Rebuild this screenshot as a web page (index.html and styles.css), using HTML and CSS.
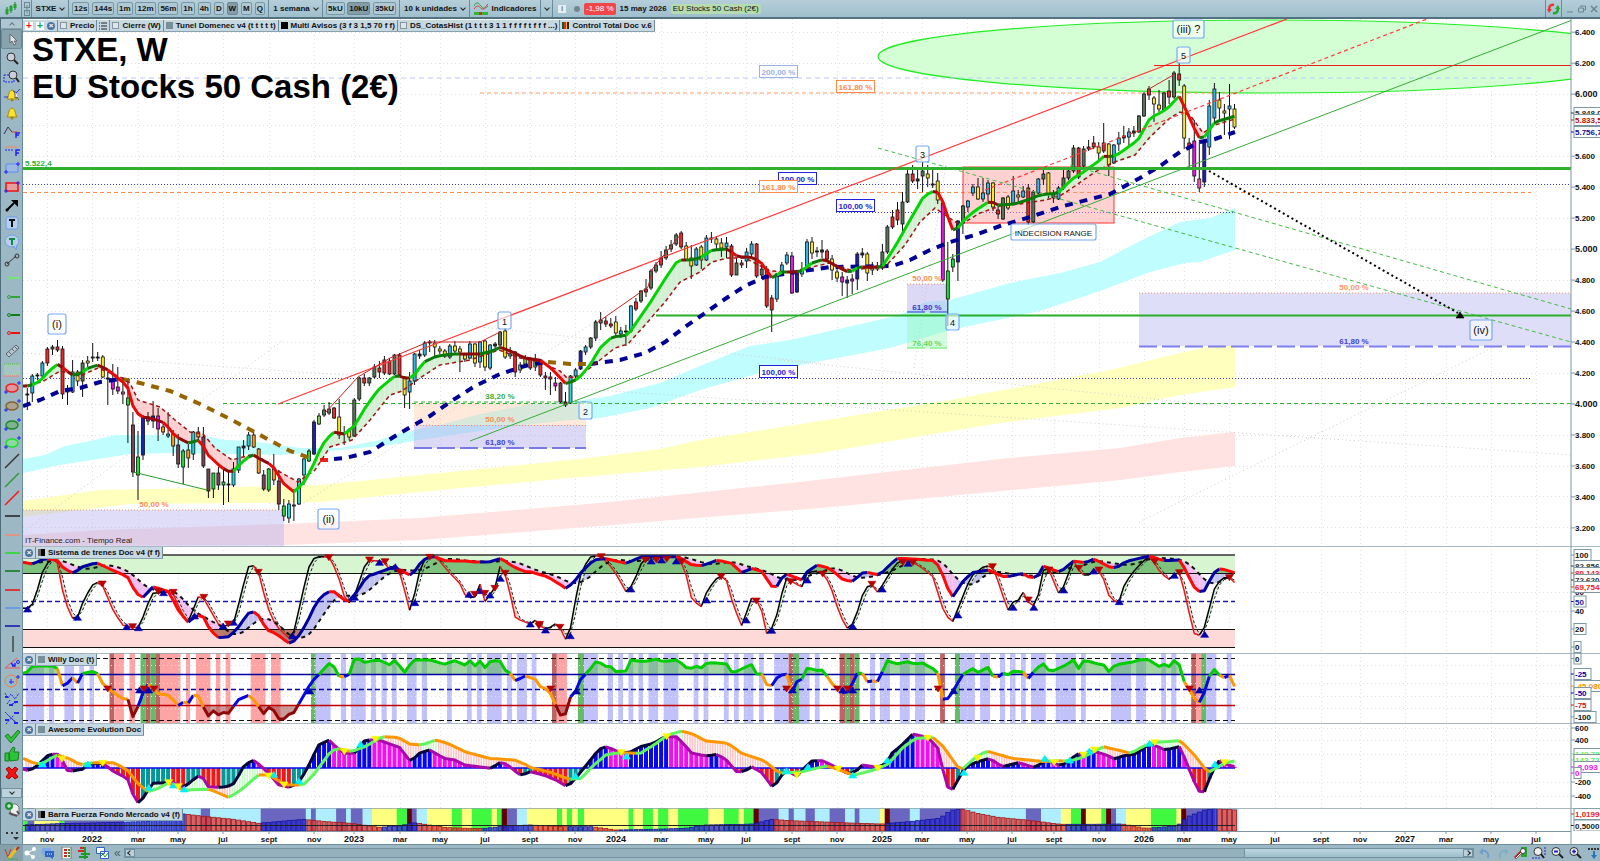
FILE: index.html
```html
<!DOCTYPE html>
<html lang="es">
<head>
    <meta charset="UTF-8">
    <meta name="viewport" content="width=device-width, initial-scale=1.0">
    <title>STXE - EU Stocks 50 Cash (2€)</title>
    <link rel="stylesheet" href="styles.css">
</head>
<body>
    <header class="toolbar">
        <div class="cell logo">
            <svg width="12" height="14" viewBox="0 0 12 14"><path d="M2 5v8M6 3v8M10 0v8" stroke="#1b7d22" stroke-width="1"/><path d="M2 7v5M6 4v5M10 2v4" stroke="#25a32c" stroke-width="3"/></svg>
        </div>
        <div class="cell link">
            <svg width="6" height="14" viewBox="0 0 6 14" fill="none" stroke="#6f8793"><rect x=".5" y=".5" width="5" height="5"/><rect x=".5" y="8.500" width="5" height="5"/><path d="M3 3v8"/></svg>
        </div>
        <div class="cell symbol"><button class="drop">STXE <i class="chev"></i></button></div>
        <div class="cell frames">
            <button>12s</button><button>144s</button><button>1m</button><button>12m</button><button>56m</button><button>1h</button><button>4h</button><button>D</button><button class="on">W</button><button>M</button><button>Q</button>
        </div>
        <div class="cell period"><button class="drop">1 semana <i class="chev"></i></button></div>
        <div class="cell frames units"><button>5kU</button><button class="on">10kU</button><button>35kU</button></div>
        <div class="cell count"><button class="drop">10 k unidades <i class="chev"></i></button></div>
        <div class="cell indic">
            <button class="drop"><svg width="14" height="13" viewBox="0 0 14 13" fill="none"><path d="M0 4C3-2 5 2 7 4s3 4 7 0" stroke="#2c9a35"/><path d="M0 7c4-6 6-1 8 0s4-3 6-5" stroke="#d33"/><path d="M0 10h14v3H0z" fill="#2db836"/><path d="M5 10h3v3H5z" fill="#e22"/></svg>Indicadores</button>
        </div>
        <div class="cell more"><button class="drop" aria-label="Más indicadores"><i class="chev"></i></button></div>
        <div class="info">
            <span class="i">i</span><span class="dot"></span>
            <span class="change">-1,98 %</span>
            <b>15 may 2026</b>
            <span class="name">EU Stocks 50 Cash (2€)</span>
        </div>
        <div class="window">
            <button class="sync" aria-label="Sincronizar"><svg width="13" height="12" viewBox="0 0 13 12" fill="none" stroke-width="2.500"><path d="M7 2C3 1 2 4 2 7" stroke="#e8382e"/><path d="M0 6h5L2 10z" fill="#e8382e"/><path d="M6 10c4 1 5-2 5-5" stroke="#22a82c"/><path d="M8 6h5l-2-4z" fill="#22a82c"/></svg></button>
            <button aria-label="Minimizar"><svg width="8" height="8" viewBox="0 0 8 8"><path d="M1 7h6" stroke="#6d8591"/></svg></button>
            <button aria-label="Restaurar"><svg width="8" height="8" viewBox="0 0 8 8" fill="none" stroke="#6d8591"><path d="M2.500 2V1h5v4h-2"/><path d="M.5 3h5v4h-5z"/></svg></button>
            <button aria-label="Cerrar"><svg width="8" height="8" viewBox="0 0 8 8"><path d="M1 1l6 6M7 1L1 7" stroke="#6d8591" stroke-width="1.500"/></svg></button>
        </div>
    </header>

    <div class="work">
        <nav class="tools" aria-label="Herramientas de dibujo">
            <button class="fold" aria-label="Subir"><i class="chev up"></i></button>
            <div class="list" id="tools"></div>
            <button class="fold low" aria-label="Bajar"><i class="chev"></i></button>
            <button class="extra" aria-label="Plantillas"><svg width="18" height="18" viewBox="0 0 18 18"><path d="M6 3h7l3 3v8H8z" fill="#eee" stroke="#777"/><circle cx="6" cy="5" r="4" fill="#1d9433"/><path d="M4 5h4M6 3v4" stroke="#fff"/><path d="M6 12l8 3M14 10l2 3" stroke="#555" stroke-width="2"/></svg></button>
            <button class="extra" aria-label="Más"><svg width="18" height="18" viewBox="0 0 18 18"><path d="M3 8h2v2H3zM8 8h2v2H8zM13 8h2v2h-2zM10 13h6l-3 3z" fill="#333"/></svg></button>
        </nav>

        <main class="charts">
            <section class="panel">
                <svg id="price" viewBox="23 19 1577 527" preserveAspectRatio="none" role="img" aria-label="Precio"></svg>
                <div class="legend">
                    <span class="key acts"><i class="sq red">+</i><i class="sq green">+</i><i class="x">×</i></span>
                    <span class="key"><i class="box"></i>Precio</span>
                    <span class="key"><svg width="8" height="8" viewBox="0 0 8 8"><path d="M0 1h1M2 1h6M0 4h1M2 4h6M0 7h1M2 7h6" stroke="#222"/></svg></span>
                    <span class="key"><i class="box"></i>Cierre (W)</span>
                    <span class="key"><i class="box fill"></i>Tunel Domenec v4 (t t t t t)</span>
                    <span class="key"><i class="box black"></i>Multi Avisos (3 f 3 1,5 70 f f)</span>
                    <span class="key"><i class="box"></i>DS_CotasHist (1 t t t 3 1 1 f f f f t f f f ...)</span>
                    <span class="key"><i class="bars"></i>Control Total Doc v.6</span>
                </div>
                <h1>STXE, W<br>EU Stocks 50 Cash (2€)</h1>
            </section>
            <section class="panel">
                <svg id="trains" viewBox="23 546 1577 107" preserveAspectRatio="none" role="img" aria-label="Sistema de trenes"></svg>
                <div class="legend"><span class="key acts"><i class="x">×</i></span><span class="key"><i class="box half"></i>Sistema de trenes Doc v4 (f f)</span></div>
            </section>
            <section class="panel">
                <svg id="willy" viewBox="23 653 1577 70" preserveAspectRatio="none" role="img" aria-label="Willy Doc"></svg>
                <div class="legend"><span class="key acts"><i class="x">×</i></span><span class="key"><i class="box fill"></i>Willy Doc (t)</span></div>
            </section>
            <section class="panel">
                <svg id="awesome" viewBox="23 723 1577 85" preserveAspectRatio="none" role="img" aria-label="Awesome Evolution"></svg>
                <div class="legend"><span class="key acts"><i class="x">×</i></span><span class="key"><i class="box fill"></i>Awesome Evolution Doc</span></div>
            </section>
            <section class="panel">
                <svg id="force" viewBox="23 808 1577 23" preserveAspectRatio="none" role="img" aria-label="Barra Fuerza"></svg>
                <div class="legend"><span class="key acts"><i class="x">×</i></span><span class="key"><i class="box half"></i>Barra Fuerza Fondo Mercado v4 (f)</span></div>
            </section>
            <section class="panel">
                <svg id="months" viewBox="23 831 1577 13" preserveAspectRatio="none" role="img" aria-label="Fechas"></svg>
            </section>
        </main>
    </div>

    <footer class="bottom">
        <button class="pencil" aria-label="Dibujar"><svg width="16" height="14" viewBox="0 0 16 14" fill="none"><path d="M1 3l3 8 3-8" stroke="#c33"/><path d="M5 12l8-10" stroke="#e8c21a" stroke-width="3"/><path d="M4 13h10" stroke="#4a4"/><path d="M12 4l3-3" stroke="#a33" stroke-width="2"/></svg></button>
        <div class="left">
            <button aria-label="Compartir"><svg width="13" height="12" viewBox="0 0 13 12"><path d="M11 2L3 6l7 4" stroke="#fff" fill="none"/><circle cx="3" cy="6" r="2.500" fill="#fff"/><circle cx="10" cy="2" r="2" fill="#fff"/><circle cx="9" cy="10" r="2" fill="#fff"/></svg></button>
            <button aria-label="Mensajes"><svg width="13" height="12" viewBox="0 0 13 12"><path d="M0 1h9v6H4l-3 2V7H0z" fill="#7da9e8"/><path d="M3 4h9v6h-1v2L8 10H3z" fill="#2f63c4"/><path d="M5 7h1M7 7h1M9 7h1" stroke="#fff"/></svg></button>
            <button aria-label="Informe"><svg width="13" height="12" viewBox="0 0 13 12"><path d="M2 0h9v12H2z" fill="#f4f4f4" stroke="#777"/><path d="M4 3h3M4 6h3M4 9h3" stroke="#c22" stroke-width="2"/><path d="M8 3h2M8 6h2M8 9h2" stroke="#292" stroke-width="2"/></svg></button>
            <button aria-label="Libro"><svg width="13" height="12" viewBox="0 0 13 12"><path d="M2 1h6M0 4h6" stroke="#d22" stroke-width="2"/><path d="M3 7h9M1 10h9" stroke="#1e9a2b" stroke-width="2"/><path d="M7 0v12" stroke="#1e9a2b" stroke-width="2"/></svg></button>
            <button aria-label="Ventanas"><svg width="13" height="12" viewBox="0 0 13 12" fill="#fff" stroke="#2f63c4"><path d="M.5 .5h8v6h-8zM4.500 4.500h8v7h-8z"/><path d="M5 9l2-2 2 3 3-4" fill="none" stroke="#292"/></svg></button>
            <span class="laquo">«</span>
        </div>
        <div class="scroll">
            <button aria-label="Atrás"><i class="chev back"></i></button>
            <span class="track"></span><span class="thumb"></span>
            <button aria-label="Adelante"><i class="chev next"></i></button>
        </div>
        <div class="right">
            <button aria-label="Deshacer"><svg width="14" height="12" viewBox="0 0 14 12" fill="none"><path d="M3 4c5-1 8 1 7 7" stroke="#6f9fc8" stroke-width="2"/><path d="M1 5l4-4v7z" fill="#6f9fc8"/></svg></button>
            <button aria-label="Rehacer"><svg width="14" height="12" viewBox="0 0 14 12" fill="none"><path d="M11 4c-5-1-8 1-7 7" stroke="#7db0c4" stroke-width="2"/><path d="M13 5L9 1v7z" fill="#7db0c4"/></svg></button>
            <button aria-label="Ajustes"><svg width="14" height="12" viewBox="0 0 14 12"><path d="M7 0h6v10H7z" fill="#28a832"/><path d="M1 11l7-7" stroke="#b22" stroke-width="3"/><path d="M2 11l6-6" stroke="#fff"/><circle cx="9" cy="4" r="2.500" fill="#fff" stroke="#444"/></svg></button>
            <button aria-label="Zoom ajustado"><svg width="14" height="12" viewBox="0 0 14 12"><circle cx="6" cy="4.500" r="4" fill="#eee" stroke="#333"/><path d="M9 7l3 4" stroke="#222" stroke-width="2"/><path d="M13 0v8M0 11h8" stroke="#22c" stroke-dasharray="2 1"/></svg></button>
            <button aria-label="Alejar"><svg width="14" height="12" viewBox="0 0 14 12"><circle cx="6" cy="4.500" r="4" fill="#eee" stroke="#333"/><path d="M9 7l4 4" stroke="#222" stroke-width="2"/><path d="M4 4.500h4" stroke="#22c" stroke-width="2"/></svg></button>
            <button aria-label="Acercar"><svg width="14" height="12" viewBox="0 0 14 12"><circle cx="6" cy="4.500" r="4" fill="#eee" stroke="#333"/><path d="M9 7l4 4" stroke="#222" stroke-width="2"/><path d="M4 4.500h4M6 2.500v4" stroke="#22c" stroke-width="1.500"/></svg></button>
            <button aria-label="Último dato"><svg width="14" height="12" viewBox="0 0 14 12"><path d="M2 2h12" stroke="#333" stroke-width="2" stroke-dasharray="2 1"/><path d="M8 4v7" stroke="#27b" stroke-width="2"/><path d="M5 8h6l-3 4z" fill="#27b"/></svg></button>
        </div>
    </footer>
    <script src="chart.js"></script>
</body>
</html>
```
FILE: styles.css
```css
* {
    box-sizing: border-box;
}
body {
    margin: 0;
    height: 100vh;
    display: flex;
    flex-direction: column;
    overflow: hidden;
    background: #fff;
    font-family: "Liberation Sans", Arial, sans-serif;
    font-size: 8px;
    color: #111;
}
button {
    font: inherit;
    color: inherit;
    margin: 0;
    padding: 0;
    border: 0;
    background: none;
    display: flex;
    align-items: center;
    justify-content: center;
    cursor: pointer;
}
svg {
    display: block;
    flex: none;
}
/* top bar */
.toolbar {
    display: flex;
    height: 19px;
    flex: none;
    background: linear-gradient(#b5ced9, #9fbfcd);
    border-bottom: 2px solid #527282;
    font-weight: bold;
}
.cell {
    display: flex;
    align-items: center;
    border-right: 1px solid #6c8b9a;
}
.logo {
    width: 22px;
    justify-content: center;
}
.link {
    width: 10px;
    justify-content: center;
}
.drop {
    gap: 4px;
    height: 100%;
}
.symbol {
    width: 37px;
    justify-content: center;
}
.chev {
    width: 4px;
    height: 4px;
    margin-bottom: 2px;
    border: solid #222;
    border-width: 0 1px 1px 0;
    transform: rotate(45deg);
}
.chev.up {
    margin: 2px 0 0;
    border-color: #617a86;
    transform: rotate(225deg);
}
.chev.back {
    margin: 0;
    transform: rotate(135deg);
}
.chev.next {
    margin: 0;
    transform: rotate(-45deg);
}
.frames {
    width: 200px;
    padding: 0 3px;
    justify-content: space-between;
}
.frames button {
    height: 13px;
    padding: 0 1px;
    border: 1px solid #7897a5;
    border-radius: 2px;
    background: #afc9d4;
}
.frames .on {
    background: #849ca7;
    border-color: #6d8794;
}
.period {
    width: 54px;
    justify-content: center;
}
.units {
    width: 77px;
}
.count {
    width: 70px;
    justify-content: center;
}
.indic {
    width: 71px;
    justify-content: center;
}
.more {
    width: 12px;
    justify-content: center;
}
.info {
    display: flex;
    align-items: center;
    gap: 4px;
    margin-left: 5px;
    flex: 1;
}
.info b,
.info span {
    white-space: nowrap;
}
.i {
    width: 8px;
    line-height: 8px;
    text-align: center;
    color: #6d7f88;
    background: #e6eef2;
}
.dot {
    width: 6px;
    height: 6px;
    margin-left: 4px;
    border-radius: 50%;
    background: #74868f;
}
.change {
    padding: 0 2px;
    line-height: 12px;
    border-radius: 2px;
    background: #f0484a;
    color: #fff;
    font-weight: normal;
}
.name {
    padding: 0 2px;
    line-height: 10px;
    border-radius: 2px;
    background: #b5dcae;
    font-weight: normal;
}
.window {
    display: flex;
    align-items: center;
    gap: 4px;
    padding-right: 2px;
}
.sync {
    width: 17px;
    height: 100%;
    border: solid #6c8b9a;
    border-width: 0 1px;
}
/* working area */
.work {
    display: flex;
    flex: 1;
    min-height: 0;
}
.tools {
    display: flex;
    flex-direction: column;
    flex: none;
    width: 23px;
    background: #9cb8c4;
    border-left: 1px solid #4f6e7d;
    border-right: 1px solid #6c8b9a;
}
.fold {
    height: 10px;
    flex: none;
    background: #adc6d1;
    border-bottom: 1px solid #84a0ad;
}
.fold.low {
    border: 1px solid #7592a0;
    background: #bcd2dc;
}
.list {
    display: flex;
    flex-direction: column;
    flex: 1;
    min-height: 0;
    margin-bottom: 6px;
}
.list button {
    flex: 1;
    min-height: 0;
}
.list .on {
    border: 1px solid #6d8996;
    border-radius: 2px;
    background: #88a2ae;
}
.extra {
    height: 23px;
    flex: none;
}
.charts {
    flex: 1;
    min-width: 0;
    display: grid;
    grid-template-rows: 527fr 107fr 70fr 85fr 23fr 13fr;
}
.panel {
    position: relative;
    min-height: 0;
}
.panel > svg {
    width: 100%;
    height: 100%;
    overflow: hidden;
}
.panel text {
    font-size: 8px;
    font-weight: bold;
}
.panel .big {
    font-size: 9px;
}
.panel .plain {
    font-weight: normal;
}
.panel .wave {
    font-size: 11px;
    font-weight: normal;
}
.panel .digit {
    font-size: 9px;
    font-weight: normal;
}
h1 {
    position: absolute;
    left: 9px;
    top: 12px;
    margin: 0;
    font-size: 33px;
    line-height: 37px;
    color: #000;
}
.legend {
    position: absolute;
    left: 0;
    top: 1px;
    display: flex;
    height: 12px;
    font-weight: bold;
    background: #c6d8e1;
    border-bottom: 1px solid #8aa2ae;
}
.key {
    display: flex;
    align-items: center;
    gap: 3px;
    padding: 0 2px;
    white-space: nowrap;
    border-right: 1px solid #708c9a;
}
.key i {
    font-style: normal;
}
.sq {
    width: 8px;
    line-height: 8px;
    background: #fff;
    text-align: center;
    font-size: 10px;
}
.sq.red {
    color: #e21f1f;
}
.sq.green {
    color: #1ca42a;
}
.x {
    width: 8px;
    line-height: 8px;
    border-radius: 50%;
    background: #4a73a0;
    color: #fff;
    text-align: center;
}
.box {
    width: 7px;
    height: 7px;
    border: 1px solid #87969e;
    background: #dbe6eb;
}
.box.fill {
    background: #78909a;
    border-color: #78909a;
}
.box.black {
    background: #000;
    border-color: #000;
}
.box.half {
    border: 0;
    background: linear-gradient(90deg, #666 3px, #000 3px);
}
.bars {
    width: 7px;
    height: 7px;
    background: linear-gradient(90deg, #063 2px, #e22 2px, #e22 4px, #fb0 4px, #fb0 5px, #222 5px);
}
/* bottom bar */
.bottom {
    display: flex;
    align-items: center;
    flex: none;
    height: 17px;
    background: #9cb8c4;
    border-top: 1px solid #6f8d9b;
}
.pencil {
    width: 23px;
    height: 100%;
    background: #859fab;
}
.left {
    display: flex;
    align-items: center;
    gap: 5px;
    padding: 0 3px 0 1px;
}
.laquo {
    font-size: 12px;
    line-height: 12px;
    color: #4b626d;
}
.scroll {
    display: flex;
    flex: 1;
    height: 10px;
    background: #94b0bd;
    border: 1px solid #7392a0;
}
.scroll button {
    width: 10px;
    background: #b8d0da;
    border: 1px solid #7392a0;
}
.track {
    flex: 1111;
}
.thumb {
    flex: 218;
    background: linear-gradient(#bcd6e1, #9dbecb);
    border-left: 1px solid #7392a0;
}
.right {
    display: flex;
    gap: 4px;
    padding-left: 4px;
}
```
FILE: chart.js
```js
// ---------- drawing tools ----------
const line = (c, d = 'M2 9h15') => `<path d="${d}" stroke="${c}" stroke-width="1.500"/>`;
const ray = c => `<path d="M8 9h9" stroke="${c}" stroke-width="2"/><circle cx="6" cy="9" r="1.500" fill="none" stroke="${c}"/>`;
const oval = (s, f) => `<ellipse cx="9" cy="9" rx="6" ry="4" fill="${f}" stroke="${s}" stroke-width="1.500"/><path d="M1 13h4M3 11v4M14 4h4M16 2v4" stroke="#22f"/>`;
const bell = '<path d="M4 13c2-2 1-8 5-9 4 1 3 7 5 9z" fill="#fbe32b" stroke="#a08614"/><circle cx="9" cy="14" r="1.500" fill="#a08614"/>';
const tools = [
    ['Cursor', '<path d="M7 4v9l2-2 2 4 2-1-2-3h3z" fill="#dde7ec" stroke="#555" stroke-width=".8"/>'],
    ['Lupa', '<circle cx="8" cy="8" r="4" fill="#ccd" stroke="#333"/><path d="M11 11l4 4" stroke="#222" stroke-width="2"/>'],
    ['Zoom de zona', '<path d="M1 7h10v7H1z" fill="none" stroke="#22f" stroke-dasharray="2 1"/><circle cx="10" cy="7" r="4" fill="#ccd" stroke="#333"/><path d="M13 10l3 4" stroke="#222" stroke-width="2"/>'],
    ['Alerta en línea', bell + '<path d="M1 11h4M10 5l3 2 4-4" stroke="#33f" fill="none"/><path d="M12 5v7l2-1 2 3" fill="#fff" stroke="#555"/>'],
    ['Alerta', bell],
    ['Fibonacci', '<path d="M1 11l4-7 4 5h5" stroke="#335" fill="none"/><path d="M9 9h8" stroke="#f85"/><path d="M13 15v-5h4M13 12h3" stroke="#22f" fill="none" stroke-width="1.500"/>'],
    ['Extensiones', '<path d="M2 6h13" stroke="#f85"/><path d="M2 9h8" stroke="#22f" stroke-dasharray="2 1"/><path d="M13 15V9h4M13 12h3" stroke="#22f" fill="none" stroke-width="1.500"/>'],
    ['Rectángulo azul', '<path d="M3 5h12v8H3z" fill="#9fb8e0" stroke="#5a8cf0"/><path d="M1 13h4M3 11v4M13 5h4M15 3v4" stroke="#22f"/>'],
    ['Rectángulo rojo', '<path d="M3 5h12v8H3z" fill="#e59c9c" stroke="#e11" stroke-width="1.500"/><path d="M1 13h4M3 11v4M13 5h4M15 3v4" stroke="#22f"/>'],
    ['Flecha', '<path d="M4 14l7-7" stroke="#000" stroke-width="2"/><path d="M8 4h7v7z"/><circle cx="4" cy="14" r="1.500"/>'],
    ['Texto', '<rect x="3" y="3" width="12" height="12" rx="2" fill="#b9cfe8" stroke="#6a9cf0"/><path d="M6 6h6M9 6v7" stroke="#111" stroke-width="2"/>'],
    ['Nota', '<ellipse cx="9" cy="8" rx="7" ry="6" fill="#b9cfe8" stroke="#6a9cf0"/><path d="M11 13l2 4 1-5" fill="#b9cfe8" stroke="#6a9cf0"/><path d="M6 6h6M9 6v6" stroke="#184" stroke-width="2"/>'],
    ['Segmento', '<path d="M4 13l9-8" stroke="#333"/><circle cx="4" cy="13" r="2" fill="none" stroke="#333"/><circle cx="14" cy="5" r="2" fill="none" stroke="#333"/>'],
    ['Rayo claro', ray('#6fe86f')], ['Rayo medio', ray('#2fa53a')], ['Rayo verde', ray('#0c8018')], ['Rayo rojo', ray('#f01010')],
    ['Regla', '<path d="M3 12L13 3l3 3L6 15z" fill="#bbc7cd" stroke="#567"/><path d="M6 10l2 2M9 7l2 2M12 5l2 2" stroke="#567"/>'],
    ['Canal', '<path d="M1 3h16v12H1z" fill="#a4c9b8"/><path d="M1 3h16" stroke="#5b5" stroke-dasharray="1 1"/><path d="M1 15h16" stroke="#e66" stroke-dasharray="1 1"/><path d="M1 12l4-5 3 5 4-6 2 3 3-3" fill="none" stroke="#a9b8ee"/>'],
    ['Elipse roja', oval('#e22', '#d99')], ['Elipse marrón', oval('#8a6230', '#a9a58e')], ['Elipse verde', oval('#1b8c2a', '#7fb38c')], ['Elipse clara', oval('#1ee02a', '#8fd99f')],
    ['Línea gris', line('#333', 'M2 16L16 2')], ['Línea verde', line('#2c9a35', 'M2 16L16 2')], ['Línea roja', line('#f11', 'M2 16L16 2')],
    ['Horizontal negra', line('#222')], ['Horizontal salmón', line('#f98b70')], ['Horizontal lima', line('#1de01d')], ['Horizontal verde', line('#0c7a18')],
    ['Horizontal roja', line('#e11')], ['Horizontal azul', line('#5b93ee')], ['Horizontal marino', line('#1111a8')], ['Vertical', line('#444', 'M10 1v16')],
    ['Ángulo', '<path d="M14 4L2 14h15" fill="none" stroke="#e55"/><path d="M8 9l3 3M9 12h3V9" stroke="#22f" fill="none" stroke-width="1.500"/><circle cx="15" cy="8" r="1.500" fill="none" stroke="#22f"/>'],
    ['Círculo', '<circle cx="8" cy="9" r="6" fill="none" stroke="#f08030"/><path d="M6 10h5M8 7v5M13 5h4M15 3v4" stroke="#22f"/>'],
    ['Ondas', '<path d="M2 3l3 5 3-4 4 5 4-6M4 14l3-4M9 14l6-2" stroke="#22f" stroke-dasharray="2 1" fill="none"/><path d="M2 7h3M11 12h4M6 15h4" stroke="#22f" stroke-width="2"/>'],
    ['Ondas ABC', '<path d="M2 3l4 4 5 5 4 3M3 15l8-9" stroke="#22f" stroke-dasharray="2 1"/><path d="M11 4h5M2 11h4M11 14h4" stroke="#22f" stroke-width="2"/>'],
    ['Aceptar', '<path d="M2 9l3-2 3 4 7-8 2 2-9 11z" fill="#2fc23b" stroke="#167f22"/>'],
    ['Me gusta', '<path d="M2 8h4v8H2zM6 8l4-6 2 1-1 4h5l-1 8-8 1z" fill="#2fc23b" stroke="#167f22"/>'],
    ['Borrar', '<path d="M3 5l3-2 3 3 3-3 3 2-3 4 3 4-3 2-3-3-3 3-3-2 3-4z" fill="#f01414" stroke="#a00"/>']
];
document.getElementById('tools').innerHTML = tools.map(([name, d], i) =>
    `<button aria-label="${name}"${i ? '' : ' class="on"'}><svg width="18" height="18" viewBox="0 0 18 18">${d}</svg></button>`).join('');

// ---------- helpers ----------
const R = 1571; // right edge of the plot
const LAST = 1235; // last bar with data
const STEP = 5.03;
const weeks = Array.from({ length: 241 }, (_, i) => 27.3 + i * STEP);
const months = [['nov', 47], ['2022', 92], ['mar', 138], ['may', 178], ['jul', 223], ['sept', 269], ['nov', 314], ['2023', 354], ['mar', 400], ['may', 440], ['jul', 485], ['sept', 530], ['nov', 575], ['2024', 616], ['mar', 661], ['may', 706], ['jul', 746], ['sept', 792], ['nov', 837], ['2025', 882], ['mar', 922], ['may', 967], ['jul', 1012], ['sept', 1054], ['nov', 1099], ['2026', 1144], ['mar', 1184], ['may', 1229], ['jul', 1275], ['sept', 1321], ['nov', 1360], ['2027', 1405], ['mar', 1446], ['may', 1491], ['jul', 1536]];

const nums = s => s.trim().split(/\s+/).map(p => p.split(',').map(Number));
// indicator data comes in three blocks, stored in finer units than the page pixels
const fine = (...blocks) => blocks.flatMap((s, i) => nums(s).map(([x, y]) => [i * 530 + x / 2.904, 540 + y / 3]));
const spans = (...blocks) => blocks.flatMap((s, i) => s.trim().split(/\s+/).map(t => {
    const [a, b] = t.slice(1).split('-').map(Number);
    return [t[0], i * 530 + a / 2.904, i * 530 + b / 2.904];
}));
const at = (pts, x) => {
    if (x <= pts[0][0]) return pts[0][1];
    for (let i = 1; i < pts.length; i++) {
        const [x0, y0] = pts[i - 1], [x1, y1] = pts[i];
        if (x <= x1 && x1 > x0) return y0 + (y1 - y0) * (x - x0) / (x1 - x0);
    }
    return pts[pts.length - 1][1];
};
const series = pts => [23, ...weeks].map(x => [x, at(pts, x)]);
const average = (pts, n) => pts.map(([x], i) => {
    const part = pts.slice(Math.max(0, i - n + 1), i + 1);
    return [x, part.reduce((s, p) => s + p[1], 0) / part.length];
});
const str = pts => pts.map(p => p[0].toFixed(1) + ',' + p[1].toFixed(1)).join(' ');
const poly = (pts, c, w = 1, extra = '') => `<polyline points="${str(pts)}" fill="none" stroke="${c}" stroke-width="${w}" ${extra}/>`;
const seg = (x1, y1, x2, y2, c, w = 1, dash = '') => `<line x1="${x1}" y1="${y1}" x2="${x2}" y2="${y2}" stroke="${c}" stroke-width="${w}" stroke-dasharray="${dash}"/>`;
const rect = (x, y, w, h, f, extra = '') => `<rect x="${x}" y="${y}" width="${w}" height="${h}" fill="${f}" ${extra}/>`;
const text = (x, y, s, c = '#111', cls = '', anchor = 'start') => `<text x="${x}" y="${y}" fill="${c}" class="${cls}" text-anchor="${anchor}">${s}</text>`;
const tri = (x, y, c, up) => `<path d="M${x - 4} ${up ? y + 3 : y - 3}h8l-4 ${up ? -6 : 6}z" fill="${c}" stroke="${c}" stroke-width=".6"/>`;
const marks = (pts, c, up) => pts.map(([x, y]) => tri(x, y, c, up)).join('');
const area = (a, b, f) => `<polygon points="${str(a)} ${str([...b].reverse())}" fill="${f}"/>`;
// polyline whose colour depends on each step
const tinted = (pts, color, w) => {
    let out = '', run = [pts[0]], c = color(pts[0], pts[1]);
    for (let i = 1; i < pts.length; i++) {
        const n = color(pts[i - 1], pts[i]);
        if (n !== c) {
            out += poly(run, c, w, 'stroke-linejoin="round"');
            run = [pts[i - 1]];
            c = n;
        }
        run.push(pts[i]);
    }
    return out + poly(run, c, w, 'stroke-linejoin="round"');
};
const ribbon = (a, b, up, down) => a.slice(1).map((p, i) => {
    const f = p[1] < b[i + 1][1] ? up : down;
    return area([a[i], p], [b[i], b[i + 1]], f);
}).join('');
const grid = (top, bottom, rows) => months.map(m => seg(m[1] + .5, top, m[1] + .5, bottom, '#e2e2e2', 1, '1 3')).join('')
    + rows.map(y => seg(23, Math.floor(y) + .5, R, Math.floor(y) + .5, '#e2e2e2', 1, '1 3')).join('');
const axis = (top, bottom, labels) => rect(R, top, 29, bottom - top, '#fff') + seg(R, top, R, bottom, '#7d97a4', 1)
    + labels.map(([s, y, c = '#111', boxed, big]) => {
        const w = Math.min(28, s.length * 5 + 2);
        return seg(R, y, R + 4, y, c === '#111' ? '#7d97a4' : c)
            + (boxed ? rect(R + 3, y - 5.5, w, 11, '#fff', 'stroke="#7d97a4"') : '')
            + text(R + 4, y + 3, s, c, big ? 'big' : '');
    }).join('') + seg(23, top, 1600, top, '#8ba2ad', 1.5);
const draw = (id, ...parts) => { document.getElementById(id).innerHTML = parts.join(''); };

// ---------- price ----------
// colour, body top, body bottom, high, low (one entry per week)
const candles = `k394,395,388,410 c376,393,374,402 k375,376,373,380 c363,376,361,378 r349,363,347,366 g347,349,345,355 r347,350,340,352 r349,394,346,399 y389,392,385,405 c372,392,360,393 y372,381,370,386 g363,381,360,397 y361,363,356,367 c357,358,343,362 k357,358,352,361 y357,377,355,378 k378,379,372,405 m379,389,364,395 m387,391,367,394 q392,394,377,404
l398,405,380,443 p425,472,412,477 l457,475,431,500 n417,455,415,460 m417,421,412,425 n416,421,401,428 m416,429,408,441 o427,432,424,435 c434,436,412,438 o434,446,430,456 p445,464,434,468 l451,467,449,484 o450,458,444,468 t432,454,431,460 o432,437,427,440 p437,466,427,468 p469,491,469,498 l473,489,473,498 p473,485,467,490 l482,485,470,505
k484,485,470,502 t469,485,462,487 t447,470,447,473 k446,448,440,457 t435,446,432,450 o435,447,432,448 o449,473,448,474 p475,489,470,491 l469,490,468,492 o469,480,454,485 p481,504,470,510 l506,516,499,521 t504,518,500,523 c505,506,489,521 t479,504,478,505 t459,475,458,485 l451,461,449,462 n422,454,420,455 e416,424,413,425 g410,415,405,417
g409,413,402,415 r408,418,407,419 y417,435,399,439 k433,434,426,445 y430,437,428,440 g400,436,398,437 g378,399,377,401 r378,383,374,386 g378,383,377,386 g367,377,364,378 r368,372,361,378 r360,373,356,375 r361,374,358,375 g355,374,354,375 r355,375,353,376 y377,395,376,408 c381,392,372,409 c354,381,353,385 k354,356,350,359 c343,355,341,357
k342,343,340,352 y343,347,340,356 y349,351,346,354 y351,356,349,358 c346,357,344,359 y346,351,341,355 y349,352,346,372 y355,359,353,362 c344,358,341,359 y344,363,343,367 c342,362,341,368 y341,367,340,371 c345,368,344,370 k344,346,342,348 g332,345,331,347 y331,357,328,359 c354,356,347,359 r352,372,351,377 e365,370,362,373 e358,364,355,366
r359,368,357,370 e360,367,354,371 r360,375,359,377 r376,378,372,390 r377,379,372,395 m383,386,377,391 p383,402,382,403 p402,405,392,407 t376,403,375,404 c370,376,368,380 n351,369,350,370 c347,352,345,355 g338,347,337,349 g322,338,320,341 g320,323,312,330 r321,324,317,327 r324,326,318,328 y322,333,316,336 c331,334,327,338 k331,332,325,346
c306,331,305,333 r302,309,298,311 g291,301,290,303 r289,292,279,297 g271,288,269,290 g265,271,262,273 r258,265,251,268 g250,258,246,260 g245,249,240,252 g235,244,233,246 r233,247,231,249 y246,260,242,261 y258,266,245,279 c249,265,247,266 y247,260,245,269 c238,260,235,261 k238,239,232,243 y239,244,236,249 y243,248,238,257 c243,247,237,258
r246,275,244,277 g263,275,258,275 r263,265,260,268 c252,261,248,268 c244,254,241,256 r244,276,243,278 g269,275,262,279 r269,306,266,308 r298,310,295,332 c274,299,273,302 c265,273,262,274 c255,263,252,265 m256,293,252,294 n274,292,272,293 c270,274,262,277 c242,270,239,272 y242,253,237,259 k251,252,247,257 k250,252,240,258 r251,259,249,262
y259,270,255,280 y272,278,268,282 m277,282,272,296 n280,283,276,298 m279,281,274,294 n254,279,252,290 k253,255,248,258 y254,273,252,281 y268,270,262,275 y266,269,262,271 g252,268,244,270 g227,252,225,254 r217,227,210,229 r210,220,202,225 g202,224,192,234 g174,202,169,203 r174,181,165,183 k179,181,170,189 g171,176,162,192 y174,178,165,187
k184,185,170,188 y181,200,173,204 m203,280,202,282 l271,299,242,326 l259,267,254,272 n221,262,220,281 g206,223,205,234 c201,207,200,212 c187,193,184,196 y187,199,178,200 c193,199,178,202 c183,194,180,201 y183,207,182,211 r210,214,206,219 g198,219,197,220 y197,208,195,210 c191,203,176,205 y195,197,190,202 c191,197,186,198 r188,222,184,225
g192,222,190,223 c179,193,178,194 g174,179,170,185 y173,194,172,198 g194,198,190,203 c188,199,186,200 g178,188,170,190 g171,178,169,180 g148,171,145,173 r148,177,147,179 g149,166,146,168 r147,149,140,151 r143,147,136,149 y147,153,142,160 r143,151,123,153 y144,165,143,176 c145,163,144,164 c138,144,132,151 k136,138,126,143 c132,137,128,146
k131,133,126,137 g116,132,115,133 g94,116,92,117 r89,95,86,100 y98,104,96,122 y105,109,90,112 g93,110,92,112 r91,97,80,104 g73,97,71,99 r74,80,63,86 y86,138,84,149 r143,148,138,167 m141,176,120,182 q179,188,142,192 n143,182,142,187 c106,147,100,155 c89,118,83,124 y100,108,92,121 y111,113,104,135 c106,109,84,139 y109,127,104,129`.split(/\s+/);
const tone = { k: '#333', c: '#30b8e8', r: '#f02828', g: '#587458', y: '#fbe822', m: '#e815e8', q: '#ff5aa5', l: '#18e038', p: '#7c4254', n: '#2020b0', o: '#ff9a20', t: '#20d8d8', e: '#84c850' };
const bodies = candles.map((s, i) => {
    const [a, b, hi, lo] = s.slice(1).split(',').map(Number), x = weeks[i];
    return seg(x.toFixed(1), hi, x.toFixed(1), lo, '#111') + rect((x - 1.5).toFixed(1), a, 3, Math.max(b - a, 1), tone[s[0]], 'stroke="#111" stroke-width=".8"');
}).join('');

const fast = nums(`23,386 30,386 40,381 50,370 58,364 62,367 72,375 80,374 88,368 98,365 108,370 120,380 127,385 133,406 140,417 150,418 165,423 175,436 188,443 200,440 208,455 222,468 232,473 240,464 252,454 260,459 272,465 284,484 294,492 304,482 312,468 322,445 333,432 345,434 355,425 365,408 378,390 396,375 405,378 412,378 424,362 437,356 455,354 480,354 493,351 499,347 510,351 525,358 540,360 552,369 566,384 578,379 590,365 600,348 612,337 628,335 636,323 650,303 665,279 678,260 690,260 700,258 712,250 728,249 738,257 750,257 760,261 772,278 782,272 800,272 812,263 824,259 838,267 850,273 858,267 870,267 882,267 896,245 910,220 924,196 934,191 940,193 946,212 954,233 964,220 976,210 990,201 998,205 1015,204 1030,199 1040,195 1058,193 1072,179 1085,171 1100,160 1104,156 1112,157 1120,153 1138,140 1150,118 1160,113 1168,108 1179,96 1187,112 1194,128 1200,139 1203,139 1215,122 1235,116`);
const slow = nums(`23,386 42,382 60,371 80,376 98,368 120,377 130,383 138,400 160,407 175,420 190,432 203,434 215,448 232,460 250,455 262,459 280,472 298,482 315,470 330,447 352,440 370,420 390,395 402,391 420,378 440,365 470,360 499,350 520,358 540,362 560,371 567,378 580,376 600,360 615,348 628,344 645,325 665,302 680,282 700,272 712,262 728,258 745,258 770,271 790,272 812,267 830,263 850,270 870,268 885,267 905,245 920,222 935,208 945,215 960,225 980,213 1000,206 1020,204 1045,200 1060,196 1075,186 1095,172 1112,163 1135,155 1150,137 1170,118 1180,112 1190,115 1203,133 1215,125 1235,119`);
const F = series(fast), S = series(slow);
const cyan = area(nums('23,459 45,455 65,446 90,441 115,435 200,435 225,440 250,441 300,448 340,448 380,440 400,433 440,425 480,414 530,404 570,402 610,396 660,383 700,366 750,346 790,340 830,331 900,315 925,302 950,300 1010,283 1060,273 1100,262 1140,241 1180,222 1210,218 1235,208'),
    nums('23,473 60,465 130,454 170,453 280,455 320,452 390,445 420,440 500,428 560,421 600,418 650,408 700,390 760,373 800,365 890,348 950,330 1040,311 1100,291 1150,272 1185,263 1200,262 1235,250'), '#bffdff');
const yellow = area(nums('23,501 100,490 200,488 320,485 420,475 580,459 660,449 700,440 820,421 950,400 1110,370 1180,353 1235,341'),
    nums('23,517 130,504 260,503 320,502 420,492 570,478 700,467 820,453 1000,423 1120,408 1180,395 1235,387'), '#ffffbe');
const pink = area(nums('23,535 100,530 284,524 420,518 600,503 800,482 1000,459 1120,448 1180,438 1235,432'),
    nums('23,546 284,545 420,540 600,526 820,508 1120,480 1180,472 1235,466'), '#ffe2e2');
const tag = (x, y, w, s, c) => rect(x, y, w, 12, '#fff', `stroke="${c}"`) + text(x + w / 2, y + 9, s, c, '', 'middle');
const wave = (x, y, w, h, s, cls = 'wave') => rect(x, y, w, h, '#fff', 'fill-opacity=".6" rx="2" stroke="#77a8f5" stroke-width="1.200"') + text(x + w / 2, y + h / 2 + 4, s, '#111', cls, 'middle');
const dashes = (pts, c) => poly(nums(pts), c, 4, 'stroke-dasharray="8 7"');

const rows = [];
for (let p = 6400; p >= 3200; p -= 200) rows.push([p, +(404 - (p - 4000) * 0.1549).toFixed(1)]);

draw('price',
    grid(19, 546, rows.map(r => r[1])),
    pink, yellow, cyan,
    '<ellipse cx="1267" cy="56.500" rx="389" ry="36.500" fill="#ccffcc" fill-opacity=".85" stroke="#22ee22" stroke-width="1.200"/>',
    // faint projection lines
    seg(23, 353, 360, 376, '#ccc', 1, '1 3'), seg(23, 532, 282, 341, '#ccc', 1, '1 3'), seg(300, 505, 590, 325, '#ccc', 1, '1 3'), seg(460, 325, 820, 363, '#ccc', 1, '1 3'),
    seg(400, 377, R, 455, '#ccc', 1, '1 3'), seg(1139, 522, R, 309, '#ccc', 1, '1 3'), seg(780, 360, 1230, 407, '#ccc', 1, '1 3'), seg(914, 368, 946, 164, '#ccc', 1, '1 3'),
    // retracement zones
    rect(23, 510, 261, 36, '#b9b4ee', 'fill-opacity=".45"'), seg(23, 510, 284, 510, '#ff9460', 1, '1 2'), text(154, 507, '50,00 %', '#ff8c5a', '', 'middle'),
    rect(414, 403, 172, 22, '#ffc9a4', 'fill-opacity=".4"'), rect(414, 425, 172, 23, '#b9b4ee', 'fill-opacity=".5"'),
    seg(414, 402, 586, 402, '#3a3', 1, '4 3'), seg(414, 425.5, 586, 425.5, '#f85', 1, '1 2'), seg(414, 448, 586, 448, '#7878e8', 2, '18 5'),
    text(500, 399, '38,20 %', '#3aae3a', '', 'middle'), text(500, 422, '50,00 %', '#f59055', '', 'middle'), text(500, 445, '61,80 %', '#4444d0', '', 'middle'),
    rect(907, 284, 40, 28, '#b9b4ee', 'fill-opacity=".5"'), rect(907, 312, 40, 36, '#90f5b0', 'fill-opacity=".4"'),
    seg(907, 284, 947, 284, '#f85', 1, '1 2'), seg(907, 312, 947, 312, '#33d', 1, '18 5'), seg(907, 348, 947, 348, '#5e5', 1, '18 5'),
    rect(1139, 293, 432, 53, '#dedef8'), seg(1139, 293, R, 293, '#ff9460', 1, '1 2'), seg(1139, 346.5, R, 346.5, '#7f7fee', 2, '18 5'),
    text(1354, 290, '50,00 %', '#ff9460', '', 'middle'), text(1354, 344, '61,80 %', '#4444d0', '', 'middle'),
    // horizontal levels
    seg(23, 78, 1531, 78, '#b4ccff', 1, '5 4'), seg(480, 93, LAST, 93, '#ff9a62', 1, '4 3'), seg(23, 184.5, R, 184.5, '#3a3af0', 1, '1 2'),
    seg(23, 192.5, 1531, 192.5, '#ff8a4a', 1, '4 3'), seg(836, 212.5, LAST, 212.5, '#3a3af0', 1, '1 2'), seg(23, 378.5, 1532, 378.5, '#3a3af0', 1, '1 2'),
    seg(223, 403.5, R, 403.5, '#2fae34', 1, '4 3'), seg(656, 315.5, R, 315.5, '#28ae28', 2),
    rect(963, 167, 151, 56, '#ff9a9a', 'fill-opacity=".45" stroke="#f33"'),
    ribbon(F, S, '#d5efd5', '#ffcfcf'), bodies,
    dashes('23,406 40,400 60,391 80,388 100,382 120,379', '#000096'), dashes('122,379 140,383 170,391 200,404 230,419 260,435 290,451 310,458', '#986400'), dashes('320,460 329,460', '#f02020'),
    dashes('334,459 345,458 370,452 400,433 430,416 450,402 475,386 500,374 525,366 545,362', '#000096'), dashes('548,362 570,364 590,364', '#986400'),
    dashes('590,364 620,360 645,353 665,342 685,327 705,313 725,299 745,286 765,277 790,273 830,267 892,266 910,260 930,250 950,242 975,235 1000,226 1030,217 1060,207 1110,194 1140,178 1160,166 1180,152 1200,142 1215,139 1235,132', '#000096'),
    poly(slow, '#a01414', 1.5, 'stroke-dasharray="4 3"'),
    tinted(F, (a, b) => { const d = b[1] - a[1]; return d < -2.5 ? '#04d404' : d < 0 ? '#077a07' : d > 3.5 ? '#e80808' : '#900a0a'; }, 3),
    // trend lines
    seg(23, 168.5, R, 168.5, '#2fb02f', 3), text(25, 166, '5.522,4', '#2fae34'),
    seg(278, 404, 1287, 19, '#ff3a3a', 1.2), seg(470, 441, R, 20.5, '#35ad35', 1), seg(1154, 65.5, R, 65.5, '#f01c1c', 1.2), seg(985, 190, 1427, 19, '#ff3a3a', 1.2, '4 3'),
    seg(878, 148, R, 342, '#45bb45', 1, '4 3'), seg(1070, 165, R, 309, '#45bb45', 1, '4 3'),
    poly(nums('325,413 358,377 390,358 428,342 480,342 500,332'), '#c22'), poly(nums('598,322 648,287 653,268 682,233'), '#c22'), seg(1149, 89, 1175, 74, '#c22'), seg(133, 472, 207, 490, '#2a9a2a', 1),
    seg(1209, 171, 1458, 313, '#000', 2, '2 3'), tri(1460, 315, '#000', true),
    text(927, 281, '50,00 %', '#f59055', '', 'middle'), text(927, 310, '61,80 %', '#3a3acc', '', 'middle'), text(927, 346, '76,40 %', '#5fd85f', '', 'middle'),
    tag(759.5, 65.5, 38, '200,00 %', '#9ab2e8'), tag(836.5, 80.5, 38, '161,80 %', '#ff8a4a'), tag(778.5, 172.5, 38, '100,00 %', '#2222dd'), tag(759.5, 180.5, 38, '161,80 %', '#ff8a4a'), tag(836.5, 199.5, 38, '100,00 %', '#2222dd'), tag(759.5, 365.5, 38, '100,00 %', '#2222dd'),
    wave(48, 314, 18, 20, '(i)'), wave(318, 509, 21, 20, '(ii)'), wave(498, 312, 13, 17, '1', 'digit'), wave(579, 402, 13, 17, '2', 'digit'), wave(916, 146, 13, 16, '3', 'digit'), wave(946, 314, 13, 16, '4', 'digit'),
    wave(1177, 47, 13, 16, '5', 'digit'), wave(1173, 20, 31, 18, '(iii) ?'), wave(1470, 320, 22, 20, '(iv)'), wave(1011, 224, 85, 16, 'INDECISION RANGE', 'plain'),
    text(25, 543, 'IT-Finance.com - Tiempo Real', '#222', 'plain'),
    axis(18, 546, [...rows.filter(r => r[0] !== 5800).map(([p, y]) => [(p / 1000).toFixed(3), y, '#111', false, p % 1000 === 0]), ['5.848,0', 113, '#333', true], ['5.833,5', 120, '#b01010', true], ['5.756,7', 132, '#1010a0', true]])
);

// ---------- Sistema de trenes ----------
const trainFast = fine(
    '67,205 80,205 97,190 125,90 150,52 165,60 185,170 208,235 225,232 245,175 275,125 295,130 330,215 360,260 402,263 420,220 440,160 500,155 530,225 548,245 575,170 592,175 610,210 640,262 680,250 700,160 722,80 735,75 755,105 772,190 800,255 840,295 850,290 870,200 895,85 915,50 955,50 978,95 1000,170 1015,190 1030,165 1065,60 1115,65 1130,90 1148,75 1162,100 1190,213 1200,180 1225,65 1250,48 1270,55 1300,92 1335,130 1355,175 1380,170 1395,130 1408,185 1437,145 1450,75 1470,110 1497,235 1540,252',
    '15,240 30,258 50,270 72,250 88,265 103,298 115,280 130,190 150,90 178,48 205,48 235,80 255,110 280,158 300,130 325,65 345,50 430,50 450,90 470,180 498,200 515,150 550,105 570,120 590,195 615,258 645,170 658,180 672,210 688,283 700,270 720,215 742,110 760,125 793,142 803,100 830,92 850,100 870,130 900,225 920,265 940,250 970,150 990,130 1010,158 1050,90 1075,60 1115,68 1140,85 1170,110 1200,210 1225,252 1245,200 1280,110 1320,78 1342,78 1365,140 1387,213 1405,183 1420,180 1435,152 1455,210 1475,170 1492,85 1505,85 1535,160',
    '10,140 40,60 60,103 80,108 98,90 115,92 130,125 145,178 172,187 185,140 205,105 240,65 262,48 290,95 315,120 335,100 347,98 365,170 388,280 412,288 425,240 450,140 470,115 490,110 507,128');
const trainSlow = fine(
    '67,67 95,72 110,65 130,55 165,60 185,85 213,100 240,80 280,68 325,90 370,110 395,160 415,172 445,140 490,155 520,215 548,248 570,225 590,230 610,270 635,293 665,290 690,265 720,220 735,215 750,225 775,270 800,280 840,310 860,300 890,250 920,185 950,155 970,155 1010,188 1040,150 1065,110 1120,90 1145,80 1165,92 1195,108 1220,70 1240,52 1265,50 1290,62 1345,63 1380,66 1420,66 1455,55 1490,80 1530,97',
    '0,95 50,110 85,132 103,145 125,130 150,95 185,60 215,55 280,70 325,50 430,50 470,75 500,77 545,60 585,70 615,98 645,85 675,95 700,138 715,142 740,100 790,120 805,95 835,75 870,85 910,120 937,124 970,95 1015,105 1065,55 1130,58 1170,62 1190,80 1210,140 1228,170 1260,120 1285,98 1330,90 1380,112 1430,100 1455,115 1475,108 1490,78 1535,95',
    '5,92 40,63 75,68 98,57 120,68 145,82 165,83 190,65 250,50 262,48 300,62 347,60 365,90 388,140 405,155 420,152 445,100 465,85 507,98');
const TF = series(trainFast), TS = series(trainSlow), TL = average(TS, 6), TFL = average(TF, 2);
const clip = (id, y, h) => `<clipPath id="${id}"><rect x="23" y="${y}" width="1548" height="${h}"/></clipPath>`;
const toLevel = (pts, y, f, id) => `<g clip-path="url(#${id})">${area(pts, [[pts[0][0], y], [pts[pts.length - 1][0], y]], f)}</g>`;

draw('trains',
    clip('over80', 546, 27.5), clip('under20', 629.5, 20),
    grid(546, 653, [592, 611]),
    rect(23, 555, LAST - 23, 18, '#d8f5d2'), rect(23, 629, LAST - 23, 18, '#fddad8'),
    ribbon(TS, TL, '#c2c2ee', '#f2c0f0'), ribbon(TF, TFL, '#d2f2d2', '#fbd4d0'),
    toLevel(TS, 573.5, '#7fc27d', 'over80'), toLevel(TS, 629.5, '#b97c6c', 'under20'),
    seg(23, 555, LAST, 555, '#333', 1.5), seg(23, 573.5, LAST, 573.5, '#111'), seg(23, 601.5, LAST, 601.5, '#1a1aa8', 1.5, '5 3'), seg(23, 629.5, LAST, 629.5, '#111'), seg(23, 647.5, LAST, 647.5, '#111'),
    poly(TFL, '#222', 1, 'stroke-dasharray="3 2"'), tinted(TF, (a, b) => b[1] > a[1] ? '#e01c1c' : '#000', 1.5),
    poly(TL, '#111', 2, 'stroke-dasharray="4 4"'), tinted(TS, (a, b) => b[1] > a[1] ? '#ff0808' : '#0000a0', 3),
    marks(fine('80,207 225,232 368,260 402,263 475,158 565,228 648,258 678,247 850,288 1030,172 1102,67 1148,80 1205,188 1362,163 1393,152 1423,165 1453,115 1540,252', '45,270 117,287 293,147 352,63 382,60 425,63 513,180 628,240 702,271 805,120 937,258 1023,147 1098,70 1243,225 1403,202 1463,202 1550,150', '98,93 172,185 332,106 420,283'), '#0000b0', true),
    marks(fine('297,132 385,260 460,155 503,157 592,172 663,252 750,97 955,53 1073,60 1118,65 1162,97 1248,52 1378,163 1408,160 1437,145 1467,100 1565,258', '28,253 87,262 207,50 335,60 367,60 397,58 440,65 555,110 657,183 757,125 850,102 993,133 1083,68 1112,68 1343,80 1447,180 1507,90', '55,85 113,90 275,65 347,98 492,113'), '#b80000', false),
    axis(546, 653, [['60', 592], ['100', 555, '#111', true], ['82,856', 566, '#333', true], ['80,143', 573, '#f02020', true], ['72,620', 580, '#333', true], ['69,754', 587, '#f02020', true], ['50', 601.5, '#1a1aa8', true], ['40', 611], ['20', 629, '#111', true], ['0', 647, '#111', true]])
);

// ---------- Willy ----------
const willy = series(fine(
    '67,400 80,395 95,378 165,378 180,438 192,436 208,410 225,430 240,400 280,393 297,430 315,445 335,462 355,475 372,478 385,532 405,490 425,430 440,440 455,460 490,466 518,497 535,485 545,492 563,463 577,468 590,500 605,528 620,512 635,525 650,517 665,520 690,480 725,465 745,490 765,522 780,502 793,508 810,537 825,537 840,522 852,520 880,470 905,425 925,405 955,370 970,380 985,410 1012,410 1028,358 1040,355 1060,368 1080,362 1100,360 1133,375 1147,360 1175,397 1200,360 1250,360 1290,373 1320,362 1350,375 1365,362 1380,378 1393,362 1408,383 1423,365 1450,360 1467,390 1480,398 1497,423 1525,408 1545,415 1552,408',
    '10,410 30,440 55,450 72,490 88,525 100,532 118,470 135,450 150,410 165,400 195,360 215,378 235,380 248,395 280,393 292,360 330,365 370,357 385,365 428,360 460,388 485,378 500,385 515,367 572,372 588,400 643,373 660,405 672,400 688,435 703,437 718,412 745,398 752,440 762,460 775,425 793,415 807,378 825,392 850,390 880,435 905,458 925,455 950,400 968,400 983,433 997,420 1010,425 1038,362 1065,372 1098,365 1120,373 1138,368 1183,393 1200,485 1220,470 1255,405 1285,385 1300,398 1330,382 1345,410 1365,412 1375,398 1390,405 1405,392 1435,397 1450,420 1465,390 1493,370 1510,397 1535,385',
    '3,383 40,360 55,387 70,360 110,372 128,375 142,395 160,375 215,365 235,358 262,360 285,380 302,373 318,380 333,360 347,375 362,430 380,455 395,485 408,488 420,455 435,405 448,388 465,408 478,413 492,405 507,440'));
const back = { b: '#c2c2fa', d: '#bd6464', p: '#ffa4a4', g: '#66bb66' };
draw('willy',
    clip('over25', 653, 21), clip('under75', 705, 18),
    spans('b75-128 b142-157 b187-215 b230-244 b260-273 d318-332 p332-360 p376-392 g408-423 d423-437 g437-451 d451-466 p466-524 p540-552 p569-611 p627-640 p655-669 p728-771 p787-815 g903-917 b917-960 b990-1005 b1019-1062 b1077-1092 b1108-1123 b1138-1152 b1182-1210 b1225-1240 b1298-1312 b1356-1370 b1385-1399 b1414-1457 b1472-1487 b1501-1530 b1544-1558',
        'd64-78 p78-107 g139-157 b157-197 b226-241 b256-270 b286-300 b315-328 b344-372 b388-431 b475-489 b504-518 b563-577 b592-606 b621-649 b665-679 b709-751 d751-766 g766-783 b783-812 b827-841 d899-915 g915-929 d929-943 g943-957 b987-1002 b1016-1045 b1074-1103 b1118-1147 d1191-1205 g1234-1249 b1249-1292 b1307-1336 b1365-1380 b1394-1410 b1426-1440 b1455-1498 b1527-1539',
        'b0-46 b61-75 b148-206 b221-250 b294-308 b323-338 d381-395 p395-410 g410-425 b425-454 b484-498').map(([c, a, b]) => rect(a.toFixed(1), 653, (b - a).toFixed(1), 70, back[c])).join(''),
    grid(653, 723, [665, 683, 696, 708]),
    toLevel(willy, 674.5, 'rgba(90,180,90,.55)', 'over25'), toLevel(willy, 705.5, 'rgba(150,60,60,.5)', 'under75'),
    seg(23, 658.5, LAST, 658.5, '#111', 1, '5 3'), seg(23, 674.5, LAST, 674.5, '#0000a0', 1.5), seg(23, 689.5, LAST, 689.5, '#0000a0', 1.5, '5 3'), seg(23, 705.5, LAST, 705.5, '#c00000', 1.5), seg(23, 720.5, LAST, 720.5, '#111', 1, '5 3'),
    tinted(willy, (a, b) => { const m = (a[1] + b[1]) / 2; return m > 705 ? '#900808' : m < 674 ? '#00cc00' : b[1] > a[1] ? '#ff9800' : '#0808e0'; }, 3),
    marks(fine('405,450 432,450 900,453', '135,453 762,450 908,450 937,450 1230,452', '405,450'), '#0000b0', true), marks(fine('313,447 418,447 447,447', '60,447 745,447 893,447 922,447 1185,447', '376,447'), '#b80000', false),
    axis(653, 723, [['0', 658.5, '#111', true], ['-25', 674, '#0000a0', true], ['-45,080', 686, '#ff9800', true], ['-50', 693, '#0000a0', true], ['-75', 705, '#d01010', true], ['-100', 717, '#111', true]])
);

// ---------- Awesome Evolution ----------
const A = series(fine(
    '67,688 85,692 105,680 140,645 165,640 180,660 198,695 240,688 255,672 300,670 330,695 370,715 385,760 403,792 425,760 440,730 500,728 535,742 560,720 583,703 605,740 640,742 665,738 680,730 710,675 735,660 755,675 780,700 810,735 840,742 865,730 890,690 925,615 955,600 975,620 1000,640 1030,640 1060,600 1100,600 1160,622 1192,665 1220,638 1248,630 1290,655 1320,660 1350,675 1425,685 1457,665 1480,680 1510,705 1539,698',
    '0,695 40,705 75,720 103,737 120,730 160,680 200,628 222,620 250,632 285,640 320,620 360,610 390,590 425,590 445,610 470,640 515,648 545,643 570,660 600,695 620,695 645,680 675,700 703,740 720,725 740,690 775,708 800,680 820,662 850,662 885,680 925,702 945,695 965,675 1010,682 1035,670 1050,640 1080,615 1112,582 1155,592 1185,625 1210,740 1228,748 1245,715 1265,680 1300,665 1335,655 1370,680 1420,668 1465,683 1500,660 1535,675',
    '5,676 30,660 50,640 70,645 85,635 110,637 135,645 160,658 180,648 220,642 260,612 280,618 305,630 347,620 365,660 385,715 405,755 420,755 440,700 460,660 480,672 512,682'));
const B = series(fine(
    '67,655 100,670 120,672 165,645 200,655 235,675 260,668 330,668 370,690 400,730 430,755 460,745 490,728 530,750 610,748 665,773 700,750 750,705 780,705 830,735 880,735 910,705 960,635 980,625 1020,635 1060,620 1110,590 1155,592 1190,612 1225,615 1265,600 1300,610 1350,635 1420,655 1495,660 1530,675',
    '0,682 60,697 115,718 150,715 180,680 220,645 260,638 320,640 360,615 400,585 440,573 475,583 510,603 575,610 615,640 680,662 725,700 790,695 860,678 895,688 940,706 1000,690 1040,672 1080,625 1120,595 1170,592 1200,620 1250,692 1290,655 1325,633 1400,655 1500,665 1535,662',
    '5,664 40,660 70,650 125,620 180,633 205,640 240,620 270,607 350,602 390,645 430,698 480,668 512,662'));
const ZERO = 768;
const sticks = A.slice(1).map(([x, y], i) => {
    const up = y < A[i][1], c = y < ZERO ? (up ? '#0808ee' : '#f010f0') : (up ? '#009898' : '#f01818');
    const by = B[i + 1][1], tint = by < B[i][1] ? '#c8fac8' : '#ffc4c4';
    return rect((x - 2).toFixed(1), Math.min(y, by), 1.5, Math.abs(y - by), tint) + rect((x + .5).toFixed(1), Math.min(y, by), 1.5, Math.abs(y - by), tint)
        + rect((x - 2).toFixed(1), Math.min(y, ZERO), 4, Math.abs(y - ZERO), c);
}).join('');
draw('awesome',
    grid(723, 808, [728, 740, 754, 782, 796]), sticks,
    seg(23, ZERO, LAST, ZERO, '#0808ee', 1.5),
    tinted(A, (a, b) => b[1] < a[1] ? '#06063a' : '#aa08aa', 3), tinted(B, (a, b) => b[1] < a[1] ? '#60f560' : '#ff9600', 3),
    marks(fine('123,672 255,672 432,742 503,735 535,747 795,703 868,722 1047,612', '132,707 280,648 745,692 807,680 937,705 1038,660 1260,697 1495,655', '28,660 85,633 260,610 450,672'), '#00f0f8', true),
    marks(fine('180,658 298,670 490,728 518,740 780,708 825,735 1000,635 1090,598', '265,638 397,590 775,706 895,687 1010,685 1155,595 1300,655 1522,668', '68,645 100,630 275,608 478,668'), '#f8f800', false),
    axis(723, 808, [['600', 728], ['400', 740], ['149,79', 754, '#60f560', true], ['142,72', 760, '#60e560', true], ['-8,093', 767, '#f010f0', true], ['0', 773, '#f010f0', true], ['-200', 782], ['-400', 796]])
);

// ---------- Barra Fuerza ----------
const zone = { c: '#aeeeff', v: '#6b66bf', y: '#ffff80', l: '#40f840', m: '#620000' };
const height = fine('67,855 200,850 300,848 420,845 532,822 600,830 680,838 750,850 880,838 950,845 1020,850 1100,862 1160,858 1200,848 1300,863 1400,866 1470,858 1539,855',
    '0,855 100,860 180,860 250,870 350,868 450,865 510,855 650,852 700,838 760,842 900,848 1020,852 1100,845 1190,835 1220,812 1250,806 1300,820 1360,832 1440,840 1535,852',
    '5,853 80,853 180,852 250,865 340,858 370,830 420,810 450,806 512,810');
draw('force',
    spans('l67-80 v80-100 y100-172 l172-187 v187-360 c360-583 v583-610 c610-757 v757-888 c888-903 v903-917 c917-976 v976-1005 c1005-1019 v1019-1053 c1053-1080 y1080-1152 l1152-1182 m1182-1196 v1196-1210 c1210-1240 y1240-1312 l1312-1341 y1341-1370 l1370-1428 y1428-1443 l1443-1457 m1457-1472 v1472-1501 c1501-1530 y1530-1568',
        'y29-78 l78-93 y93-107 l107-122 y122-139 l139-157 y157-286 l286-300 y300-328 l328-357 y357-372 l372-402 y402-430 l430-518 y518-563 l563-606 y606-621 l621-649 m649-664 v664-722 c722-751 v751-766 c766-800 v800-827 c827-870 v870-915 c915-943 v943-957 c957-1016 y1016-1030 m1030-1045 v1045-1103 c1103-1132 v1132-1260 c1260-1440 v1440-1484 c1484-1541',
        'y3-32 l32-61 m61-75 y75-120 l120-134 m134-148 v148-163 c163-192 y192-264 l264-338 y338-352 m352-367 v367-450 c450-518').map(([c, a, b]) => rect(a.toFixed(1), 808, (b - a + .3).toFixed(1), 23, zone[c])).join(''),
    weeks.map((x, i) => {
        const y = at(height, x), up = at(height, x - STEP) >= y, stroke = up ? '#1414a0' : '#a01414';
        return rect((x - 2).toFixed(1), y.toFixed(1), 4, (831 - y).toFixed(1), up ? '#3030d0' : '#e04040', `fill-opacity=".8" stroke="${stroke}" stroke-width=".8"`);
    }).join(''),
    seg(23, 825.5, LAST, 825.5, '#222'),
    axis(808, 831, [['1,0199', 814, '#f02020', true], ['0,5000', 825.5, '#222', true]])
);

draw('months', seg(23, 831.5, R, 831.5, '#7d97a4', 1), seg(R, 831, R, 844, '#7d97a4'),
    months.map(([s, x]) => seg(x, 831, x, 834, '#7d97a4') + text(x, 842, s, '#111', s.length === 4 && +s ? 'big' : '', 'middle')).join(''));
```
